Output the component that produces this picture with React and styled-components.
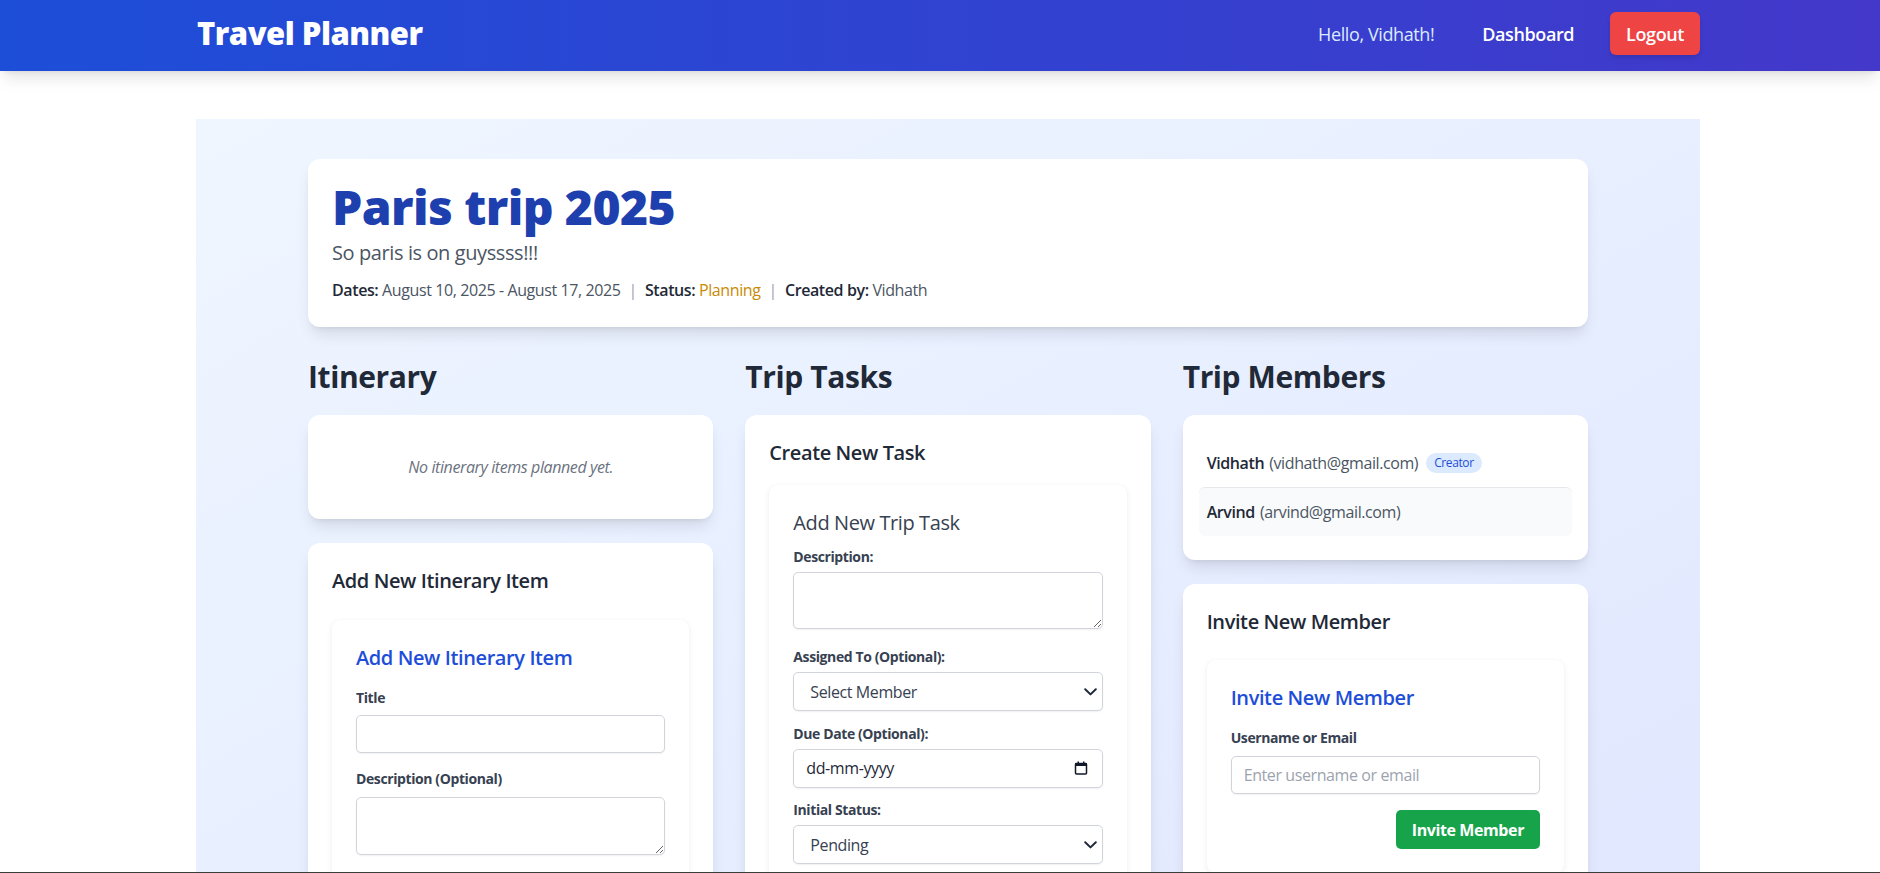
import React from "react";
import styled, { createGlobalStyle } from "styled-components";

const GlobalStyle = createGlobalStyle`
  html { scrollbar-width: none; }
  html::-webkit-scrollbar, body::-webkit-scrollbar { display: none; }
  * { box-sizing: border-box; }
  body {
    margin: 0;
    background: #ffffff;
    font-family: "Open Sans", "Noto Sans", sans-serif;
    color: #1f2937;
    letter-spacing: -0.025em;
  }
  input, select, textarea, button { font-family: inherit; letter-spacing: inherit; }
`;

const NavBar = styled.header`
  height: 71px;
  background: linear-gradient(to right, #1d4ed8, #4338ca);
  box-shadow: 0 10px 15px -3px rgba(0, 0, 0, 0.1), 0 4px 6px -4px rgba(0, 0, 0, 0.1);
`;

const NavInner = styled.div`
  width: 1504px;
  height: 100%;
  margin-left: 196px;
  padding-bottom: 4px;
  display: flex;
  align-items: center;
  justify-content: space-between;
`;

const Brand = styled.div`
  font-size: 31px;
  line-height: 1;
  font-weight: 800;
  color: #ffffff;
  letter-spacing: -0.5px;
  padding-left: 1px;
`;

const NavLinks = styled.nav`
  display: flex;
  align-items: center;
`;

const Greeting = styled.span`
  font-size: 18px;
  line-height: 28px;
  color: #dbeafe;
  font-weight: 500;
  margin-right: 48px;
`;

const NavLink = styled.a`
  font-size: 18px;
  line-height: 28px;
  font-weight: 600;
  color: #ffffff;
  text-decoration: none;
  margin-right: 36px;
`;

const LogoutButton = styled.button`
  height: 43px;
  padding: 0 16px;
  border: none;
  border-radius: 6px;
  background: #ef4444;
  color: #ffffff;
  font-size: 18px;
  font-weight: 600;
  box-shadow: 0 4px 6px -1px rgba(0, 0, 0, 0.1), 0 2px 4px -2px rgba(0, 0, 0, 0.1);
`;

const Main = styled.main`
  width: 1504px;
  min-height: 754px;
  margin: 48px 0 0 196px;
  padding: 40px 0 48px;
  background: linear-gradient(to bottom right, #eff6ff, #e0e7ff);
`;

const Content = styled.div`
  max-width: 1280px;
  margin: 0 auto;
`;

const HeaderCard = styled.section`
  background: #ffffff;
  border-radius: 12px;
  padding: 24px 24px 25px;
  margin-bottom: 32px;
  box-shadow: 0 10px 15px -3px rgba(0, 0, 0, 0.1), 0 4px 6px -4px rgba(0, 0, 0, 0.1);
`;

const TripTitle = styled.h1`
  margin: 0 0 8px;
  font-size: 48px;
  line-height: 48px;
  font-weight: 800;
  color: #1e40af;
  letter-spacing: -0.012em;
`;

const TripDescription = styled.p`
  margin: 0 0 11px;
  font-size: 20px;
  line-height: 28px;
  color: #4b5563;
`;

const MetaLine = styled.p`
  margin: 0;
  font-size: 16px;
  line-height: 24px;
  color: #4b5563;
`;

const MetaLabel = styled.span`
  font-weight: 600;
  color: #1f2937;
`;

const MetaSep = styled.span`
  margin: 0 8px;
  color: #9ca3af;
`;

const StatusValue = styled.span`
  color: #ca8a04;
`;

const Columns = styled.div`
  display: grid;
  grid-template-columns: repeat(3, 1fr);
  gap: 32px;
  align-items: start;
`;

const Column = styled.section`
  min-width: 0;
`;

const ColumnTitle = styled.h2`
  margin: 0 0 20px;
  font-size: 30px;
  line-height: 36px;
  font-weight: 700;
  color: #1f2937;
`;

const Stack = styled.div`
  display: flex;
  flex-direction: column;
  gap: 24px;
`;

const Card = styled.div`
  background: #ffffff;
  border-radius: 12px;
  padding: ${(p) => p.$pad || "24px"};
  box-shadow: 0 10px 15px -3px rgba(0, 0, 0, 0.1), 0 4px 6px -4px rgba(0, 0, 0, 0.1);
`;

const CardTitle = styled.h3`
  margin: 0 0 ${(p) => p.$mb}px;
  font-size: 20px;
  line-height: 28px;
  font-weight: 600;
  color: #1f2937;
`;

const EmptyText = styled.p`
  margin: 0;
  padding: 16px 0;
  text-align: center;
  font-style: italic;
  font-size: 16px;
  line-height: 24px;
  color: #6b7280;
`;

const FormCard = styled.form`
  background: #ffffff;
  border-radius: 8px;
  padding: 24px;
  box-shadow: 0 2px 6px rgba(0, 0, 0, 0.07), 0 0 1px rgba(0, 0, 0, 0.05);
`;

const FormTitle = styled.h4`
  margin: 0 0 ${(p) => p.$mb}px;
  font-size: 20px;
  line-height: 28px;
  font-weight: ${(p) => (p.$blue ? 600 : 500)};
  color: ${(p) => (p.$blue ? "#1d4ed8" : "#374151")};
`;

const Field = styled.div`
  margin-bottom: ${(p) => p.$mb}px;
  &:last-child { margin-bottom: 0; }
`;

const Label = styled.label`
  display: block;
  margin-bottom: ${(p) => p.$gap}px;
  font-size: 14px;
  line-height: 20px;
  font-weight: 700;
  color: #374151;
`;

const TextInput = styled.input`
  display: block;
  width: 100%;
  height: ${(p) => p.$h || 38}px;
  padding: 0 12px;
  border: 1px solid #d1d5db;
  border-radius: 5px;
  background: #ffffff;
  box-shadow: 0 1px 2px rgba(0, 0, 0, 0.06);
  font-size: 16px;
  color: #1f2937;
  outline: none;
  &::placeholder { color: ${(p) => (p.$darkHint ? "#1f2937" : "#9ca3af")}; }
`;

const TextArea = styled.textarea`
  display: block;
  width: 100%;
  height: ${(p) => p.$h}px;
  padding: 8px 12px;
  border: 1px solid #d1d5db;
  border-radius: 5px;
  background: #ffffff;
  box-shadow: 0 1px 2px rgba(0, 0, 0, 0.06);
  font-size: 16px;
  color: #1f2937;
  resize: vertical;
  outline: none;
`;

const ControlWrap = styled.div`
  position: relative;
`;

const Select = styled.select`
  display: block;
  width: 100%;
  height: 39px;
  padding: 0 30px 0 16px;
  border: 1px solid #d1d5db;
  border-radius: 5px;
  background: #ffffff;
  box-shadow: 0 1px 2px rgba(0, 0, 0, 0.06);
  font-size: 16px;
  color: #374151;
  appearance: none;
  outline: none;
`;

const ControlIcon = styled.svg`
  position: absolute;
  top: 50%;
  right: ${(p) => p.$right}px;
  transform: translateY(-50%);
  pointer-events: none;
`;

const MemberList = styled.ul`
  list-style: none;
  margin: 0;
  padding: 0;
`;

const MemberRow = styled.li`
  display: flex;
  align-items: center;
  padding: 12px 8px;
  font-size: 16px;
  line-height: 24px;
  color: #4b5563;
  border-radius: 6px;
  border-top: ${(p) => (p.$divider ? "1px solid #e5e7eb" : "none")};
  background: ${(p) => (p.$highlight ? "#f9fafb" : "transparent")};
`;

const MemberName = styled.span`
  font-weight: 600;
  color: #1f2937;
  margin-right: 5px;
`;

const Badge = styled.span`
  margin-left: 8px;
  height: 20px;
  padding: 0 8px;
  border-radius: 9999px;
  background: #dbeafe;
  color: #1d4ed8;
  font-size: 12px;
  line-height: 20px;
  font-weight: 500;
`;

const ButtonRow = styled.div`
  display: flex;
  justify-content: flex-end;
`;

const ActionButton = styled.button`
  height: 39px;
  padding: 0 16px;
  border: none;
  border-radius: 5px;
  background: #16a34a;
  color: #ffffff;
  font-size: 16px;
  font-weight: 700;
`;

const BottomEdge = styled.div`
  position: fixed;
  left: 0;
  right: 0;
  bottom: 0;
  height: 1px;
  background: #3c3c3c;
`;

const Chevron = () => (
  <ControlIcon $right={6} width="13" height="8" viewBox="0 0 13 8" fill="none">
    <path d="M1.2 1.2 L6.5 6.4 L11.8 1.2" stroke="#1f2937" strokeWidth="2" strokeLinecap="round" strokeLinejoin="round" />
  </ControlIcon>
);

const CalendarGlyph = () => (
  <ControlIcon $right={15} width="14" height="14" viewBox="0 0 14 14" fill="none">
    <rect x="1.5" y="2.5" width="11" height="10.5" rx="1" stroke="#111827" strokeWidth="1.5" />
    <rect x="1" y="2" width="12" height="3" fill="#111827" />
    <rect x="3.5" y="0.5" width="1.5" height="2.5" fill="#111827" />
    <rect x="9" y="0.5" width="1.5" height="2.5" fill="#111827" />
  </ControlIcon>
);

export default function App() {
  return (
    <>
      <GlobalStyle />
      <NavBar>
        <NavInner>
          <Brand>Travel Planner</Brand>
          <NavLinks>
            <Greeting>Hello, Vidhath!</Greeting>
            <NavLink href="#">Dashboard</NavLink>
            <LogoutButton>Logout</LogoutButton>
          </NavLinks>
        </NavInner>
      </NavBar>

      <Main>
        <Content>
          <HeaderCard>
            <TripTitle>Paris trip 2025</TripTitle>
            <TripDescription>So paris is on guyssss!!!</TripDescription>
            <MetaLine>
              <MetaLabel>Dates:</MetaLabel> August 10, 2025 - August 17, 2025
              <MetaSep>|</MetaSep>
              <MetaLabel>Status:</MetaLabel> <StatusValue>Planning</StatusValue>
              <MetaSep>|</MetaSep>
              <MetaLabel>Created by:</MetaLabel> Vidhath
            </MetaLine>
          </HeaderCard>

          <Columns>
            <Column>
              <ColumnTitle>Itinerary</ColumnTitle>
              <Stack>
                <Card>
                  <EmptyText>No itinerary items planned yet.</EmptyText>
                </Card>
                <Card>
                  <CardTitle $mb={25}>Add New Itinerary Item</CardTitle>
                  <FormCard>
                    <FormTitle $blue $mb={16}>Add New Itinerary Item</FormTitle>
                    <Field $mb={16}>
                      <Label $gap={7}>Title</Label>
                      <TextInput type="text" />
                    </Field>
                    <Field $mb={16}>
                      <Label $gap={8}>Description (Optional)</Label>
                      <TextArea $h={58} />
                    </Field>
                  </FormCard>
                </Card>
              </Stack>
            </Column>

            <Column>
              <ColumnTitle>Trip Tasks</ColumnTitle>
              <Stack>
                <Card>
                  <CardTitle $mb={18}>Create New Task</CardTitle>
                  <FormCard>
                    <FormTitle $mb={10}>Add New Trip Task</FormTitle>
                    <Field $mb={18}>
                      <Label $gap={5}>Description:</Label>
                      <TextArea $h={57} />
                    </Field>
                    <Field $mb={12.5}>
                      <Label $gap={5}>Assigned To (Optional):</Label>
                      <ControlWrap>
                        <Select defaultValue="">
                          <option value="">Select Member</option>
                        </Select>
                        <Chevron />
                      </ControlWrap>
                    </Field>
                    <Field $mb={12.5}>
                      <Label $gap={5}>Due Date (Optional):</Label>
                      <ControlWrap>
                        <TextInput type="text" placeholder="dd-mm-yyyy" $darkHint $h={39} />
                        <CalendarGlyph />
                      </ControlWrap>
                    </Field>
                    <Field $mb={16}>
                      <Label $gap={5}>Initial Status:</Label>
                      <ControlWrap>
                        <Select defaultValue="pending">
                          <option value="pending">Pending</option>
                        </Select>
                        <Chevron />
                      </ControlWrap>
                    </Field>
                  </FormCard>
                </Card>
              </Stack>
            </Column>

            <Column>
              <ColumnTitle>Trip Members</ColumnTitle>
              <Stack>
                <Card $pad="24px 16px">
                  <MemberList>
                    <MemberRow>
                      <MemberName>Vidhath</MemberName>(vidhath@gmail.com)
                      <Badge>Creator</Badge>
                    </MemberRow>
                    <MemberRow $divider $highlight>
                      <MemberName>Arvind</MemberName>(arvind@gmail.com)
                    </MemberRow>
                  </MemberList>
                </Card>
                <Card>
                  <CardTitle $mb={24}>Invite New Member</CardTitle>
                  <FormCard>
                    <FormTitle $blue $mb={16}>Invite New Member</FormTitle>
                    <Field $mb={16}>
                      <Label $gap={8}>Username or Email</Label>
                      <TextInput type="text" placeholder="Enter username or email" />
                    </Field>
                    <ButtonRow>
                      <ActionButton>Invite Member</ActionButton>
                    </ButtonRow>
                  </FormCard>
                </Card>
              </Stack>
            </Column>
          </Columns>
        </Content>
      </Main>
      <BottomEdge />
    </>
  );
}
